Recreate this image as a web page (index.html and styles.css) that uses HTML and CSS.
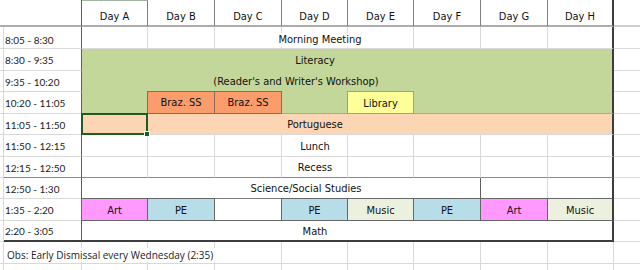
FILE: index.html
```html
<!DOCTYPE html>
<html>
<head>
<meta charset="utf-8">
<title>Schedule</title>
<link rel="stylesheet" href="styles.css">
</head>
<body>
<div class="sheet">
  <!-- header row -->
  <div class="sp r1 c1 hdrline"></div>
  <div class="lab r1 c2 hdrline"></div>
  <div class="hd r1 c3 selcol">Day A</div>
  <div class="hd r1 c4">Day B</div>
  <div class="hd r1 c5">Day C</div>
  <div class="hd r1 c6">Day D</div>
  <div class="hd r1 c7">Day E</div>
  <div class="hd r1 c8">Day F</div>
  <div class="hd r1 c9">Day G</div>
  <div class="hd r1 c10 edge">Day H</div>
  <div class="ext r1 c11 hdrline-l"></div>

  <!-- 8:05 -->
  <div class="sp r2 c1"></div>
  <div class="lab r2 c2 first">8:05 - 8:30</div>
  <div class="cell r2 c3"></div><div class="cell r2 c4"></div><div class="cell r2 c5"></div><div class="cell r2 c6"></div>
  <div class="cell r2 c7"></div><div class="cell r2 c8"></div><div class="cell r2 c9"></div><div class="cell r2 c10 edge"></div>
  <div class="ext r2 c11"></div>
  <div class="txt r2 c6 morning"><span class="wb">Morning Meeting</span></div>

  <!-- literacy block -->
  <div class="sp r3 c1"></div>
  <div class="lab r3 c2">8:30 - 9:35</div>
  <div class="ext r3 c11"></div>
  <div class="sp r4 c1"></div>
  <div class="lab r4 c2">9:35 - 10:20</div>
  <div class="ext r4 c11"></div>
  <div class="sp r5 c1"></div>
  <div class="lab r5 c2">10:20 - 11:05</div>
  <div class="ext r5 c11"></div>
  <div class="green r3 c3 w8 h3"></div>
  <div class="txt r3 c6">Literacy</div>
  <div class="txt r4 c6 readers">(Reader's and Writer's Workshop)</div>
  <div class="box braz r5 c4">Braz. SS</div>
  <div class="box braz r5 c5">Braz. SS</div>
  <div class="box library r5 c7">Library</div>

  <!-- portuguese -->
  <div class="sp r6 c1"></div>
  <div class="lab r6 c2">11:05 - 11:50</div>
  <div class="peach r6 c3 w8"></div>
  <div class="active r6 c3"><span class="handle"></span></div>
  <div class="txt r6 c6">Portuguese</div>
  <div class="ext r6 c11"></div>

  <!-- lunch -->
  <div class="sp r7 c1"></div>
  <div class="lab r7 c2">11:50 - 12:15</div>
  <div class="cell r7 c3"></div><div class="cell r7 c4"></div><div class="cell r7 c5"></div><div class="cell r7 c6"></div>
  <div class="cell r7 c7"></div><div class="cell r7 c8"></div><div class="cell r7 c9"></div><div class="cell r7 c10 edge"></div>
  <div class="ext r7 c11"></div>
  <div class="txt r7 c6"><span class="wb">Lunch</span></div>

  <!-- recess -->
  <div class="sp r8 c1"></div>
  <div class="lab r8 c2 dk">12:15 - 12:50</div>
  <div class="cell r8 c3 dk"></div><div class="cell r8 c4 dk"></div><div class="cell r8 c5 dk"></div><div class="cell r8 c6 dk"></div>
  <div class="cell r8 c7 dk"></div><div class="cell r8 c8 dk"></div><div class="cell r8 c9 dk"></div><div class="cell r8 c10 dk edge"></div>
  <div class="ext r8 c11"></div>
  <div class="txt r8 c6"><span class="wb">Recess</span></div>

  <!-- science -->
  <div class="sp r9 c1"></div>
  <div class="lab r9 c2">12:50 - 1:30</div>
  <div class="science r9 c3 w6"></div>
  <div class="cell r9 c9"></div><div class="cell r9 c10 edge"></div>
  <div class="ext r9 c11"></div>
  <div class="txt r9 c6 sci">Science/Social Studies</div>

  <!-- specials -->
  <div class="sp r10 c1"></div>
  <div class="lab r10 c2">1:35 - 2:20</div>
  <div class="box art r10 c3">Art</div>
  <div class="box pe r10 c4">PE</div>
  <div class="cell r10 c5 dk2"></div>
  <div class="box pe r10 c6">PE</div>
  <div class="box music r10 c7">Music</div>
  <div class="box pe r10 c8">PE</div>
  <div class="box art r10 c9">Art</div>
  <div class="box music r10 c10 edgebox">Music</div>
  <div class="ext r10 c11"></div>

  <!-- math -->
  <div class="sp r11 c1"></div>
  <div class="lab r11 c2 last">2:20 - 3:05</div>
  <div class="math r11 c3 w8"></div>
  <div class="txt r11 c6">Math</div>
  <div class="ext r11 c11"></div>

  <!-- obs -->
  <div class="sp r12 c1"></div>
  <div class="lab plain r12 c2"></div>
  <div class="cell r12 c3"></div><div class="cell r12 c4"></div><div class="cell r12 c5"></div><div class="cell r12 c6"></div>
  <div class="cell r12 c7"></div><div class="cell r12 c8"></div><div class="cell r12 c9"></div><div class="cell r12 c10"></div>
  <div class="ext r12 c11"></div>
  <div class="obs r12 c2"><span class="wb">Obs: Early Dismissal every Wednesday (2:35)</span></div>

  <!-- empty row (partly visible) -->
  <div class="sp tail r13 c1"></div>
  <div class="lab plain tail r13 c2"></div>
  <div class="cell tail r13 c3"></div><div class="cell tail r13 c4"></div><div class="cell tail r13 c5"></div><div class="cell tail r13 c6"></div>
  <div class="cell tail r13 c7"></div><div class="cell tail r13 c8"></div><div class="cell tail r13 c9"></div><div class="cell tail r13 c10"></div>
  <div class="ext tail r13 c11"></div>
</div>
</body>
</html>
```

FILE: styles.css
```css
* { box-sizing: border-box; margin: 0; padding: 0; }
html, body { background: #fff; }
body {
  width: 640px;
  height: 270px;
  overflow: hidden;
  font-family: "DejaVu Sans Condensed", "DejaVu Sans", sans-serif;
  font-stretch: condensed;
  font-size: 11px;
  color: #111;
}

.sheet {
  display: grid;
  grid-template-columns: 4px 78px 66px 67px 67px 66px 66px 67px 67px 66px 26px;
  grid-template-rows: 27px 22px 22px 21px 22px 21px 22px 21px 21px 22px 21px 22px 6px;
}
.sheet > div { min-width: 0; }

.c1 { grid-column-start: 1; } .c2 { grid-column-start: 2; } .c3 { grid-column-start: 3; }
.c4 { grid-column-start: 4; } .c5 { grid-column-start: 5; } .c6 { grid-column-start: 6; }
.c7 { grid-column-start: 7; } .c8 { grid-column-start: 8; } .c9 { grid-column-start: 9; }
.c10 { grid-column-start: 10; } .c11 { grid-column-start: 11; }
.r1 { grid-row-start: 1; } .r2 { grid-row-start: 2; } .r3 { grid-row-start: 3; }
.r4 { grid-row-start: 4; } .r5 { grid-row-start: 5; } .r6 { grid-row-start: 6; }
.r7 { grid-row-start: 7; } .r8 { grid-row-start: 8; } .r9 { grid-row-start: 9; }
.r10 { grid-row-start: 10; } .r11 { grid-row-start: 11; } .r12 { grid-row-start: 12; }
.r13 { grid-row-start: 13; }
.w6 { grid-column-end: span 6; }
.w8 { grid-column-end: span 8; }
.h3 { grid-row-end: span 3; }

/* plain gridline cells */
.cell, .sp, .ext {
  border-bottom: 1px solid #d9d9d9;
}
.cell { border-right: 1px solid #d9d9d9; }
.sp { border-right: 1px solid #d9d9d9; }
.hdrline { border-bottom: 2px solid #acacac; }
.hdrline-l { border-bottom: 2px solid #cfcfcf; }
.sp.hdrline { border-right: none; }
.sheet > .tail { border-bottom: none; }

/* time labels */
.lab {
  border-right: 1px solid #5e5e5e;
  border-bottom: 1px solid #d9d9d9;
  font-family: Lato, "Open Sans", sans-serif;
  font-stretch: normal;
  font-size: 10px;
  color: #222;
  display: flex;
  align-items: center;
  padding: 1px 0 0 1px;
  white-space: nowrap;
}
.lab.hdrline { border-bottom: 2px solid #acacac; }
.lab.first { padding-top: 5px; }
.lab.plain { border-right: 1px solid #d9d9d9; }
.lab.dk { border-bottom-color: #8a8a8a; }
.lab.last { border-bottom: 2px solid #3c3c3c; }

/* header */
.hd {
  border-right: 1px solid #7f7f7f;
  border-bottom: 2px solid #acacac;
  display: flex;
  justify-content: center;
  align-items: flex-end;
  line-height: 14px;
  padding-bottom: 1px;
  white-space: nowrap;
}
.selcol { border-top: 1px solid #9fb59f; }
.edge { border-right: 2px solid #3c3c3c; }
.dk { border-bottom-color: #8a8a8a; }
.dk2 { border-bottom: 1px solid #666; }

/* overflowing text, Excel style */
.txt {
  display: flex;
  justify-content: center;
  align-items: flex-end;
  line-height: 14px;
  padding-bottom: 3px;
  white-space: nowrap;
}
.wb { background: #fff; padding: 0 2px; }
.morning { padding-bottom: 2px; padding-left: 10px; }
.readers { padding-right: 38px; }
.sci { padding-right: 18px; }

.obs {
  display: flex;
  align-items: center;
  padding: 4px 0 0 1px;
  font-family: "Open Sans", Lato, sans-serif;
  font-stretch: normal;
  font-size: 10px;
  color: #222;
  white-space: nowrap;
}

/* blocks */
.green {
  background: #c4d79b;
  border-right: 2px solid #3c3c3c;
  border-bottom: 1px solid #a5ad93;
}
.peach {
  background: #fcd5b4;
  border-right: 2px solid #3c3c3c;
  border-bottom: 1px solid #d9d9d9;
}
.science {
  background: #fff;
  border-right: 1px solid #5e5e5e;
  border-bottom: 1px solid #7a7a7a;
}
.math {
  background: #fff;
  border-right: 2px solid #3c3c3c;
  border-bottom: 2px solid #3c3c3c;
}

.active {
  position: relative;
  margin: -1px 0 0 -1px;
  border: 2px solid #1f5c1f;
  background: #fcd5b4;
}
.handle {
  position: absolute;
  right: -4px;
  bottom: -4px;
  width: 6px;
  height: 6px;
  background: #1f5c1f;
  border: 1px solid #fff;
}

/* bordered coloured cells */
.box {
  margin: -1px 0 0 -1px;
  border: 1px solid #666;
  display: flex;
  justify-content: center;
  align-items: flex-end;
  line-height: 14px;
  padding-bottom: 2px;
  white-space: nowrap;
}
.braz { background: #fa9c6b; border-color: #8c6a55; padding-bottom: 3px; }
.library { background: #ffff99; border-color: #a3a36e; }
.art { background: #ff99ff; }
.pe { background: #b7dee8; }
.music { background: #ebf1de; }
.edgebox { border-right: 2px solid #3c3c3c; }
```
